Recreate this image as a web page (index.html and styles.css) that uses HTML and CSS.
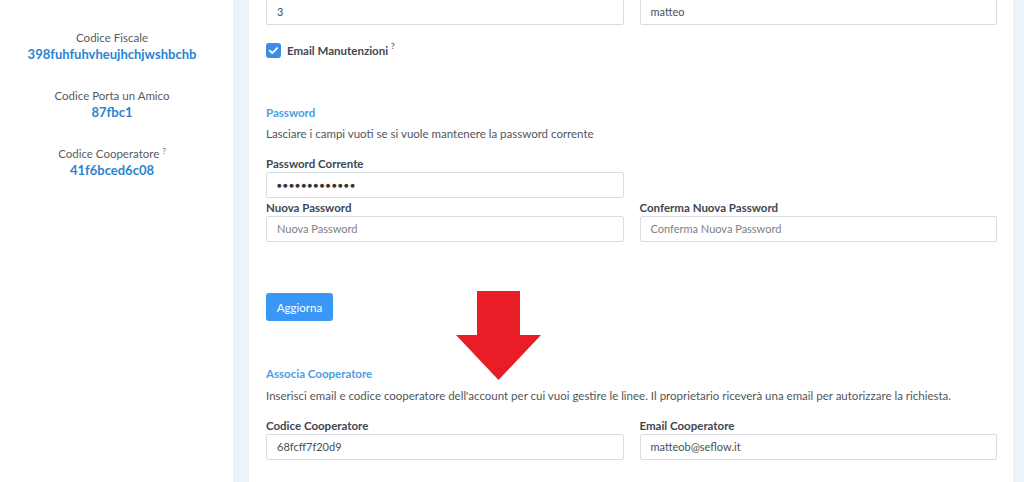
FILE: index.html
```html
<!DOCTYPE html>
<html lang="it">
<head>
<meta charset="utf-8">
<link rel="stylesheet" href="styles.css">
</head>
<body>
<div class="layout">
  <aside class="sidebar">
    <div class="info">
      <div class="info-label">Codice Fiscale</div>
      <div class="info-value">398fuhfuhvheujhchjwshbchb</div>
    </div>
    <div class="info">
      <div class="info-label">Codice Porta un Amico</div>
      <div class="info-value">87fbc1</div>
    </div>
    <div class="info">
      <div class="info-label">Codice Cooperatore <sup class="q">?</sup></div>
      <div class="info-value">41f6bced6c08</div>
    </div>
  </aside>
  <main class="main">
    <div class="row first-row">
      <div class="field"><div class="input">3</div></div>
      <div class="field"><div class="input">matteo</div></div>
    </div>
    <div class="check-row">
      <span class="checkbox"><svg viewBox="0 0 16 16" width="15" height="15"><path d="M4 8.2l2.6 2.6L12 5.4" fill="none" stroke="#fff" stroke-width="2" stroke-linecap="round" stroke-linejoin="round"/></svg></span>
      <span class="check-label">Email Manutenzioni <sup class="q">?</sup></span>
    </div>

    <h3 class="section-title pw-title">Password</h3>
    <p class="desc">Lasciare i campi vuoti se si vuole mantenere la password corrente</p>
    <div class="row group-first">
      <div class="field">
        <label class="label">Password Corrente</label>
        <div class="input dots">&#9679;&#9679;&#9679;&#9679;&#9679;&#9679;&#9679;&#9679;&#9679;&#9679;&#9679;&#9679;&#9679;</div>
      </div>
    </div>
    <div class="row row-next">
      <div class="field">
        <label class="label">Nuova Password</label>
        <div class="input placeholder">Nuova Password</div>
      </div>
      <div class="field">
        <label class="label">Conferma Nuova Password</label>
        <div class="input placeholder">Conferma Nuova Password</div>
      </div>
    </div>
    <button class="btn">Aggiorna</button>

    <h3 class="section-title assoc-title">Associa Cooperatore</h3>
    <p class="desc desc2">Inserisci email e codice cooperatore dell'account per cui vuoi gestire le linee. Il proprietario riceverà una email per autorizzare la richiesta.</p>
    <div class="row group-first2">
      <div class="field">
        <label class="label">Codice Cooperatore</label>
        <div class="input">68fcff7f20d9</div>
      </div>
      <div class="field">
        <label class="label">Email Cooperatore</label>
        <div class="input">matteob@seflow.it</div>
      </div>
    </div>

    <svg class="arrow" width="85" height="89" viewBox="0 0 85 89"><polygon points="21,0 64,0 64,44 85,44 42.5,89 0,44 21,44" fill="#e81d25"/></svg>
  </main>
</div>
</body>
</html>
```

FILE: styles.css
```css
* { box-sizing: border-box; }
html, body { margin: 0; padding: 0; }
body {
  background: #eef3f8;
  font-family: Lato, "Noto Sans", Arial, sans-serif;
  color: #3d4852;
  height: 482px;
  overflow: hidden;
}
.layout {
  display: flex;
  gap: 16px;
  height: 482px;
}
.sidebar {
  width: 233px;
  background: #fff;
  padding: 30px 9px 0 0;
  text-align: center;
}
.info { margin-bottom: 25px; }
.info-label {
  font-size: 11.5px;
  line-height: 16px;
  color: #555c63;
}
.info-value {
  font-size: 13px;
  line-height: 17px;
  font-weight: 700;
  color: #2a84d2;
}
.q {
  font-size: 8px;
  color: #4a6f96;
  vertical-align: top;
  position: relative;
  top: -3px;
}
.main {
  position: relative;
  width: 764px;
  background: #fff;
  padding: 0 16px 0 17px;
}
.row {
  display: grid;
  grid-template-columns: 1fr 1fr;
  column-gap: 16px;
}
.first-row { margin-top: -1px; }
.row-next { margin-top: 1px; }
.field { display: flex; flex-direction: column; }
.label {
  display: block;
  font-size: 11.5px;
  line-height: 17px;
  font-weight: 700;
  color: #3d4852;
}
.input {
  height: 26px;
  border: 1px solid #d9dde1;
  border-radius: 2px;
  padding: 0 10px;
  font-size: 11px;
  line-height: 24px;
  color: #495057;
  background: #fff;
}
.input.placeholder { color: #7b8187; }
.input.dots { font-size: 8px; letter-spacing: 1.3px; color: #333; }
.check-row {
  margin-top: 18px;
  display: flex;
  align-items: center;
  gap: 6px;
  height: 15px;
}
.checkbox {
  width: 15px;
  height: 15px;
  border-radius: 3px;
  background: #3a8ee6;
  display: inline-flex;
}
.check-label {
  font-size: 11.5px;
  font-weight: 700;
  color: #3d4852;
}
.section-title {
  margin: 0;
  font-size: 11.5px;
  line-height: 16px;
  font-weight: 700;
  color: #4c9ee2;
}
.pw-title { margin-top: 47px; }
.desc {
  margin: 5px 0 0;
  font-size: 11.5px;
  line-height: 16px;
  color: #50565c;
}
.group-first { margin-top: 13px; }
.btn {
  display: block;
  margin-top: 51px;
  height: 28px;
  width: 67px;
  padding: 0;
  border: none;
  border-radius: 3px;
  background: #3a97f5;
  color: #fff;
  font-family: inherit;
  font-size: 11.5px;
}
.assoc-title { margin-top: 45px; }
.desc2 { margin-top: 6px; }
.group-first2 { margin-top: 13px; }
.arrow {
  position: absolute;
  left: 207px;
  top: 291px;
}
```
